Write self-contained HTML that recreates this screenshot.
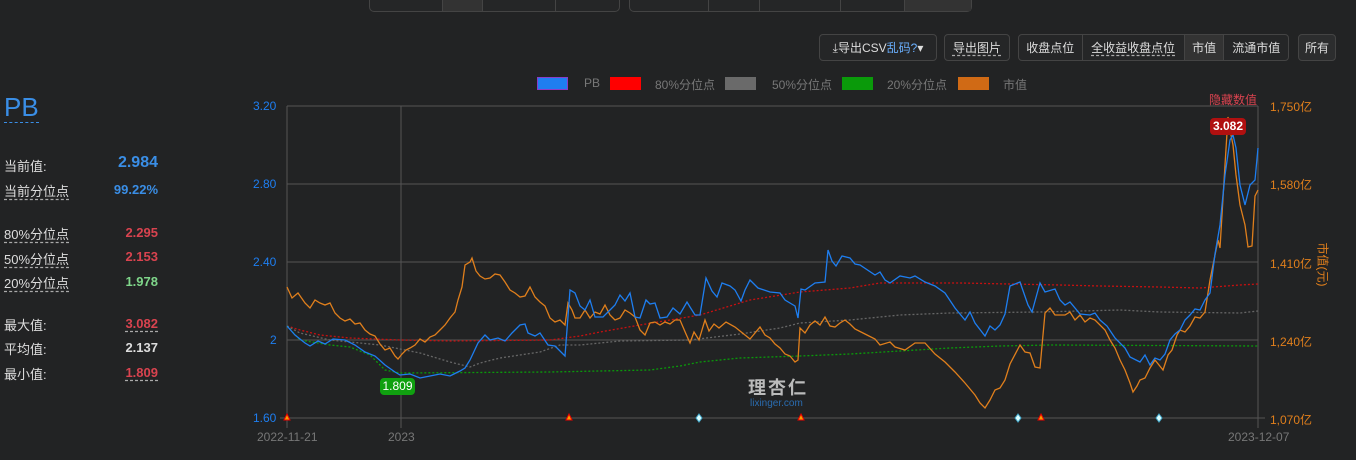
<!DOCTYPE html>
<html><head><meta charset="utf-8"><style>
*{margin:0;padding:0;box-sizing:border-box}
body{width:1356px;height:460px;background:#222324;font-family:"Liberation Sans","Noto Sans CJK SC",sans-serif;color:#ccc;position:relative;overflow:hidden;font-size:12px;white-space:nowrap}
.btn{position:absolute;border:1px solid #444;border-radius:4px;background:#252627;height:27px;top:34px;display:flex;align-items:center;justify-content:center;color:#ddd;font-size:12px}
.btn span{padding:0 6px;height:100%;display:flex;align-items:center;justify-content:center;border-right:1px solid #444}
.btn span:last-child{border-right:none}
.dash{text-decoration:underline dashed #aaa;text-underline-offset:3px}
.tg{position:absolute;top:-14px;height:26px;border:1px solid #444;border-radius:5px;background:#252627;display:flex}
.tg span{border-right:1px solid #444;height:100%}
.tg span:last-child{border-right:none}
.lab{position:absolute;left:4px;font-size:13px;color:#ddd}
.val{position:absolute;right:1198px;font-weight:bold;font-size:13px}
.ax{position:absolute;font-size:12px}
.sw{position:absolute;top:77px;width:31px;height:13px}
.lt{position:absolute;top:76px;color:#777;font-size:12px}
</style></head><body>
<div class="tg" style="left:369px;width:251px"><span style="width:74px"></span><span style="width:40px;background:#333"></span><span style="width:73px"></span><span style="width:64px"></span></div>
<div class="tg" style="left:629px;width:343px"><span style="width:79px"></span><span style="width:52px"></span><span style="width:81px"></span><span style="width:65px"></span><span style="width:66px;background:#333"></span></div>

<div class="btn" style="left:819px;width:118px"><span style="border:none;padding:0">⤓导出CSV<b style="color:#6ab0ff;font-weight:normal">乱码?</b>▾</span></div>
<div class="btn" style="left:944px;width:66px"><span class="dash">导出图片</span></div>
<div class="btn" style="left:1018px;width:271px;justify-content:flex-start"><span style="width:64px">收盘点位</span><span style="width:103px" class="dash">全收益收盘点位</span><span style="width:40px;background:#333">市值</span><span style="width:64px;border:none">流通市值</span></div>
<div class="btn" style="left:1298px;width:38px;background:#2c2d2e"><span style="padding:0">所有</span></div>

<div class="sw" style="left:537px;background:#1e7ef0;border:1px solid #8a3cc8"></div><div class="lt" style="left:584px">PB</div>
<div class="sw" style="left:610px;background:#f00"></div><div class="lt" style="left:655px">80%分位点</div>
<div class="sw" style="left:725px;background:#6a6a6a"></div><div class="lt" style="left:772px">50%分位点</div>
<div class="sw" style="left:842px;background:#0a9a0a"></div><div class="lt" style="left:887px">20%分位点</div>
<div class="sw" style="left:958px;background:#d06a15"></div><div class="lt" style="left:1003px">市值</div>

<div style="position:absolute;left:4px;top:92px;font-size:26px;color:#3a8ee6;border-bottom:1px dashed #3a8ee6;line-height:30px">PB</div>
<div class="lab" style="top:156px">当前值:</div><div class="val" style="top:154px;color:#3a8ee6;font-size:16px">2.984</div>
<div class="lab dash" style="top:181px">当前分位点</div><div class="val" style="top:182px;color:#3a8ee6">99.22%</div>
<div class="lab dash" style="top:224px">80%分位点</div><div class="val" style="top:225px;color:#d9434f">2.295</div>
<div class="lab dash" style="top:249px">50%分位点</div><div class="val" style="top:249px;color:#d9434f">2.153</div>
<div class="lab dash" style="top:273px">20%分位点</div><div class="val" style="top:274px;color:#7fd68a">1.978</div>
<div class="lab" style="top:315px">最大值:</div><div class="val dash" style="top:316px;color:#d9434f">3.082</div>
<div class="lab" style="top:339px">平均值:</div><div class="val" style="top:340px;color:#ddd">2.137</div>
<div class="lab" style="top:364px">最小值:</div><div class="val dash" style="top:365px;color:#d9434f">1.809</div>

<div class="ax" style="left:253px;top:99px;color:#1e7ef0">3.20</div>
<div class="ax" style="left:253px;top:177px;color:#1e7ef0">2.80</div>
<div class="ax" style="left:253px;top:255px;color:#1e7ef0">2.40</div>
<div class="ax" style="left:270px;top:333px;color:#1e7ef0">2</div>
<div class="ax" style="left:253px;top:411px;color:#1e7ef0">1.60</div>
<div class="ax" style="left:1270px;top:98px;color:#e07f1c">1,750亿</div>
<div class="ax" style="left:1270px;top:176px;color:#e07f1c">1,580亿</div>
<div class="ax" style="left:1270px;top:255px;color:#e07f1c">1,410亿</div>
<div class="ax" style="left:1270px;top:333px;color:#e07f1c">1,240亿</div>
<div class="ax" style="left:1270px;top:411px;color:#e07f1c">1,070亿</div>
<div class="ax" style="left:1209px;top:91px;color:#d9434f">隐藏数值</div>
<div class="ax" style="left:1297px;top:256px;color:#e07f1c;transform:rotate(90deg);width:52px;text-align:center">市值(元)</div>
<div class="ax" style="left:257px;top:430px;color:#777">2022-11-21</div>
<div class="ax" style="left:388px;top:430px;color:#777">2023</div>
<div class="ax" style="left:1228px;top:430px;color:#777">2023-12-07</div>
<div style="position:absolute;left:748px;top:374px;font-size:18px;color:#bbb;letter-spacing:2px;font-weight:bold">理杏仁</div>
<div style="position:absolute;left:750px;top:398px;font-size:10px;color:#2a6cb0">lixinger.com</div>

<svg width="1356" height="460" style="position:absolute;left:0;top:0" fill="none">
<g stroke="#555" stroke-width="1">
<line x1="287" y1="106" x2="1258" y2="106"/><line x1="287" y1="184" x2="1258" y2="184"/><line x1="287" y1="262" x2="1258" y2="262"/><line x1="287" y1="340" x2="1258" y2="340"/><line x1="280" y1="418" x2="1265" y2="418"/>
<line x1="287" y1="106" x2="287" y2="428"/><line x1="401" y1="106" x2="401" y2="428"/><line x1="1258" y1="106" x2="1258" y2="428"/>
</g>
<polyline stroke="#c81010" stroke-width="1.3" stroke-dasharray="2,2" points="287,326 300,330 320,335 350,338 400,340 450,341 550,340 580,336 600,332 640,325 700,315 750,300 800,292 850,288 880,283 960,283 1010,284 1060,285 1100,286 1160,287 1200,288 1240,285 1258,284"/>
<polyline stroke="#666" stroke-width="1.3" stroke-dasharray="2,2" points="287,326 300,333 330,340 380,345 420,353 450,362 470,367 480,363 500,358 540,352 560,345 580,345 620,341 690,340 740,334 780,328 800,323 850,320 900,315 950,313 1040,312 1120,310 1160,312 1240,313 1258,311"/>
<polyline stroke="#0a9a0a" stroke-width="1.3" stroke-dasharray="2,2" points="287,326 300,340 330,345 350,347 370,355 385,370 400,373 550,372 650,370 680,366 700,362 740,358 800,356 850,354 900,351 950,348 1000,346 1050,345 1258,346"/>
<polyline stroke="#e07f1c" stroke-width="1.3" points="287,287 292,298 298,293 305,303 310,308 315,300 320,303 325,305 330,303 335,313 340,318 345,321 350,319 355,324 360,323 365,330 370,334 375,336 380,344 385,350 390,348 395,356 398,359 402,354 406,350 410,348 415,345 420,339 425,342 430,337 435,335 440,330 445,325 450,318 455,312 458,300 462,287 465,265 470,262 472,258 476,271 480,276 485,279 490,278 495,274 500,275 505,282 510,290 515,293 520,297 525,296 530,287 535,297 540,302 545,306 550,318 555,322 560,320 565,325 568,303 572,310 575,318 580,318 585,310 590,318 595,312 600,314 605,305 610,315 615,320 620,318 625,310 630,313 635,317 640,330 645,335 650,323 655,322 660,325 665,322 670,324 675,320 680,320 686,334 690,343 694,332 699,340 705,320 709,331 714,324 719,328 726,322 735,327 745,335 750,339 755,333 760,327 765,335 770,338 775,344 780,348 785,354 790,356 795,362 798,360 800,328 805,333 810,325 815,321 820,325 825,317 830,326 835,327 840,323 845,320 850,324 855,329 865,334 875,339 880,345 890,342 895,347 905,350 915,343 925,343 935,354 945,362 955,372 965,383 975,395 980,403 985,408 990,400 995,390 1000,388 1005,380 1010,364 1020,345 1025,352 1030,353 1035,367 1040,368 1045,313 1050,308 1055,315 1065,315 1070,312 1075,320 1080,315 1085,322 1090,318 1095,320 1105,330 1110,340 1115,348 1120,360 1125,370 1130,383 1133,392 1137,386 1140,380 1145,378 1150,368 1155,360 1163,370 1168,355 1172,350 1177,335 1180,330 1185,332 1190,326 1195,317 1200,318 1205,312 1210,280 1215,255 1218,240 1220,248 1225,165 1228,117 1230,130 1233,145 1236,175 1240,205 1245,225 1248,247 1252,246 1255,196 1258,190"/>
<polyline stroke="#1e7ef0" stroke-width="1.3" points="287,326 295,335 305,343 310,346 318,341 325,344 333,339 345,340 355,345 365,352 375,356 385,365 395,372 400,375 410,374 420,378 430,376 440,374 450,376 460,371 465,368 470,360 478,343 485,335 490,340 498,338 505,341 512,333 520,325 525,324 528,333 535,336 540,333 548,345 555,346 560,351 565,356 570,290 575,293 580,306 585,310 590,300 595,317 603,317 610,310 615,305 620,295 625,301 630,293 635,317 640,318 646,300 650,304 655,303 660,318 667,317 673,308 680,314 687,302 690,307 695,315 700,315 706,278 712,291 717,297 722,283 730,286 735,290 741,301 745,290 750,280 758,288 770,292 780,293 785,300 795,306 798,318 801,289 805,290 815,283 825,282 828,250 832,261 836,266 842,256 850,258 855,264 860,265 875,275 880,272 885,280 890,283 900,276 910,278 915,276 925,282 935,286 945,293 955,308 965,320 970,312 975,323 985,336 990,326 995,330 1000,325 1005,314 1010,286 1020,282 1028,305 1032,312 1040,283 1045,292 1055,289 1060,300 1065,305 1070,302 1080,314 1090,315 1095,313 1100,320 1107,326 1115,338 1125,348 1130,357 1140,362 1145,355 1150,365 1155,358 1160,360 1165,354 1170,340 1175,334 1180,330 1185,320 1190,315 1195,309 1200,310 1205,300 1210,293 1215,254 1220,225 1225,175 1230,140 1233,135 1236,148 1240,185 1245,205 1250,185 1255,180 1258,148"/>
<g fill="#f5a000" stroke="#e00" stroke-width="1"><path d="M287 414l3 6h-6z"/><path d="M569 414l3 6h-6z"/><path d="M801 414l3 6h-6z"/><path d="M1041 414l3 6h-6z"/></g>
<g fill="#dff" stroke="#4ac" stroke-width="1"><path d="M699 414l3 4-3 4-3-4z"/><path d="M1018 414l3 4-3 4-3-4z"/><path d="M1159 414l3 4-3 4-3-4z"/></g>
</svg>
<div style="position:absolute;left:380px;top:378px;width:35px;height:17px;background:#10a010;border-radius:4px;color:#fff;font-size:12px;text-align:center;line-height:17px">1.809</div>
<div style="position:absolute;left:1210px;top:118px;width:36px;height:17px;background:#b01010;border-radius:4px;color:#fff;font-size:12px;font-weight:bold;text-align:center;line-height:17px">3.082</div>
</body></html>
